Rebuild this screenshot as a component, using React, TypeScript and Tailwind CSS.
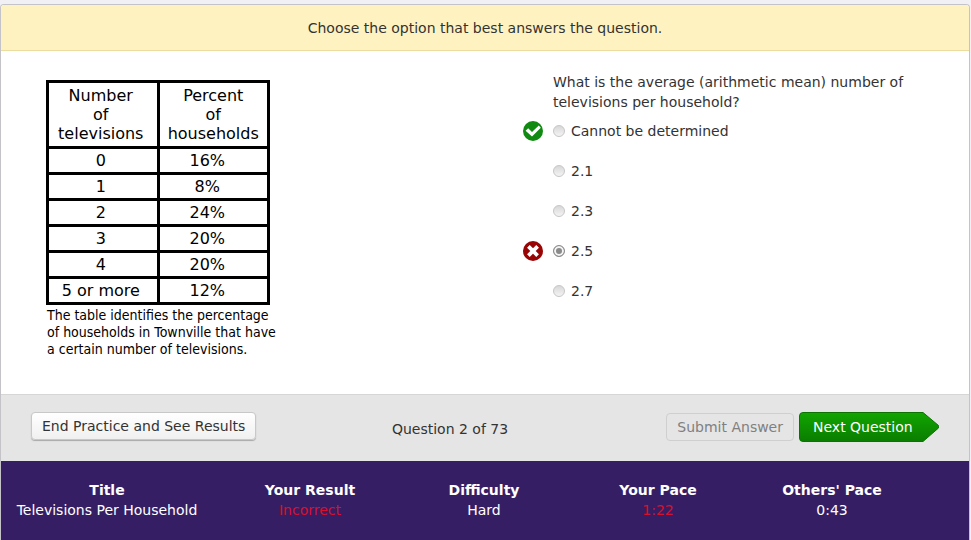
import React from "react";

const rows = [
  ["0", "16%"],
  ["1", "8%"],
  ["2", "24%"],
  ["3", "20%"],
  ["4", "20%"],
  ["5 or more", "12%"],
];

type Mark = "right" | "wrong" | null;

const options: { id: string; label: string; mark: Mark }[] = [
  { id: "a", label: "Cannot be determined", mark: "right" },
  { id: "b", label: "2.1", mark: null },
  { id: "c", label: "2.3", mark: null },
  { id: "d", label: "2.5", mark: "wrong" },
  { id: "e", label: "2.7", mark: null },
];

const stats = [
  { title: "Title", value: "Televisions Per Household", alert: false },
  { title: "Your Result", value: "Incorrect", alert: true },
  { title: "Difficulty", value: "Hard", alert: false },
  { title: "Your Pace", value: "1:22", alert: true },
  { title: "Others' Pace", value: "0:43", alert: false },
];

function RightMark() {
  return (
    <svg className="h-5 w-5" viewBox="0 0 20 20" role="img" aria-label="Correct answer">
      <circle cx="10" cy="10" r="10" fill="#108a10" />
      <path d="M2.6 9.8 5.2 7.2 9 11l6.8-6.4 2 2.2L9 15.6z" fill="#fff" />
    </svg>
  );
}

function WrongMark() {
  return (
    <svg className="h-5 w-5" viewBox="0 0 20 20" role="img" aria-label="Your answer is wrong">
      <circle cx="10" cy="10" r="10" fill="#990505" />
      <path d="M5.4 5.4 14.6 14.6M14.6 5.4 5.4 14.6" stroke="#fff" strokeWidth="3.8" />
    </svg>
  );
}

function HouseholdTable() {
  return (
    <table className="w-[224px] table-fixed border-collapse border-[3px] border-black text-center text-base leading-5 text-black [font-family:'DejaVu_Sans',sans-serif]">
      <thead>
        <tr className="h-[66px]">
          <th scope="col" className="border-[3px] border-black py-0 pl-0 pr-1 font-normal leading-[19px]">
            Number<br />of<br />televisions
          </th>
          <th scope="col" className="border-[3px] border-black p-0 font-normal leading-[19px]">
            Percent<br />of<br />households
          </th>
        </tr>
      </thead>
      <tbody>
        {rows.map(([n, p]) => (
          <tr key={n} className="h-[26px]">
            <td className="border-[3px] border-black py-0 pl-0 pr-1">{n}</td>
            <td className="border-[3px] border-black py-0 pl-0 pr-3">{p}</td>
          </tr>
        ))}
      </tbody>
    </table>
  );
}

export default function App() {
  return (
    <div className="flex min-h-screen flex-col bg-[#f1f0f4] pr-px pt-1 text-sm leading-5 text-[#333] [font-family:Verdana,'DejaVu_Sans',sans-serif]">
      <div className="flex grow flex-col overflow-hidden rounded-t border border-b-0 border-[#c4c4c8] bg-white">
        <header className="border-b border-[#ebdda0] bg-[#fff2c1] pb-3 pt-[13px] text-center">
          Choose the option that best answers the question.
        </header>

        <main className="grid min-h-[343px] grow grid-cols-2 pt-[21px]">
          <section className="pl-[45px] pt-2">
            <HouseholdTable />
            <p className="mt-0.5 w-[236px] pl-px text-sm leading-[17px] text-black [font-family:'DejaVu_Sans_Condensed','DejaVu_Sans',sans-serif]">
              The table identifies the percentage
              <br />
              of households in Townville that have
              <br />
              a certain number of televisions.
            </p>
          </section>

          <form className="pl-[38px]">
            <p className="mb-[9px] max-w-[390px] pl-[30px]">
              What is the average (arithmetic mean) number of televisions per household?
            </p>
            <div>
              {options.map((o) => (
                <div key={o.id} className="mb-5 flex h-5 items-center">
                  <span className="w-[30px]">
                    {o.mark === "right" && <RightMark />}
                    {o.mark === "wrong" && <WrongMark />}
                  </span>
                  <input
                    type="radio"
                    id={o.id}
                    name="answer"
                    defaultChecked={o.id === "d"}
                    className="mr-1.5 h-3 w-3 appearance-none rounded-full border border-[#c6c6c6] bg-linear-to-b from-[#d8d8d8] to-[#f4f4f4] checked:border-[#8c8c8c] checked:bg-none checked:bg-[#8a8a8a] checked:shadow-[inset_0_0_0_2px_#f4f4f4]"
                  />
                  <label htmlFor={o.id}>{o.label}</label>
                </div>
              ))}
            </div>
          </form>
        </main>

        <nav className="grid grid-cols-[1fr_auto_1fr] items-start border-t border-[#d6d6d6] bg-[#e5e5e5] px-[30px] pb-[19px] pt-[17px]">
          <div>
            <button
              type="button"
              className="h-7 rounded border border-[#c8c8c8] bg-linear-to-b from-white to-[#f0f0f0] px-2.5 shadow-[0_1px_1px_#a8a8a8]"
            >
              End Practice and See Results
            </button>
          </div>
          <span className="mr-[70px] pt-[7px]">Question 2 of 73</span>
          <div className="flex items-center justify-end gap-[5px]">
            <button type="button" disabled className="h-7 whitespace-nowrap rounded border border-[#cfcfcf] px-2.5 text-[#808080]">
              Submit Answer
            </button>
            <button type="button" className="relative h-[30px] w-[140px] whitespace-nowrap pl-3.5 text-left text-white">
              <svg className="absolute inset-0 h-full w-full" viewBox="0 0 140 30" aria-hidden="true">
                <defs>
                  <linearGradient id="go" x1="0" y1="0" x2="0" y2="1">
                    <stop offset="0" stopColor="#12a500" />
                    <stop offset="1" stopColor="#0a7d00" />
                  </linearGradient>
                </defs>
                <path
                  d="M4 .5H124L139.5 13.5Q140 15 139.5 16L124 29.5H4Q.5 29.5 .5 26V4Q.5.5 4 .5Z"
                  fill="url(#go)"
                  stroke="#0b7400"
                />
              </svg>
              <span className="relative">Next Question</span>
            </button>
          </div>
        </nav>

        <footer className="grid min-h-[79px] grid-cols-[222fr_174fr_174fr_174fr_174fr] bg-[#361e65] pb-4 pr-[50px] pt-[19px] text-center text-white">
          {stats.map((s) => (
            <dl key={s.title} className="whitespace-nowrap first:pr-2.5">
              <dt className="font-bold">{s.title}</dt>
              <dd className={s.alert ? "text-[#d8102c]" : ""}>{s.value}</dd>
            </dl>
          ))}
        </footer>
      </div>
    </div>
  );
}
